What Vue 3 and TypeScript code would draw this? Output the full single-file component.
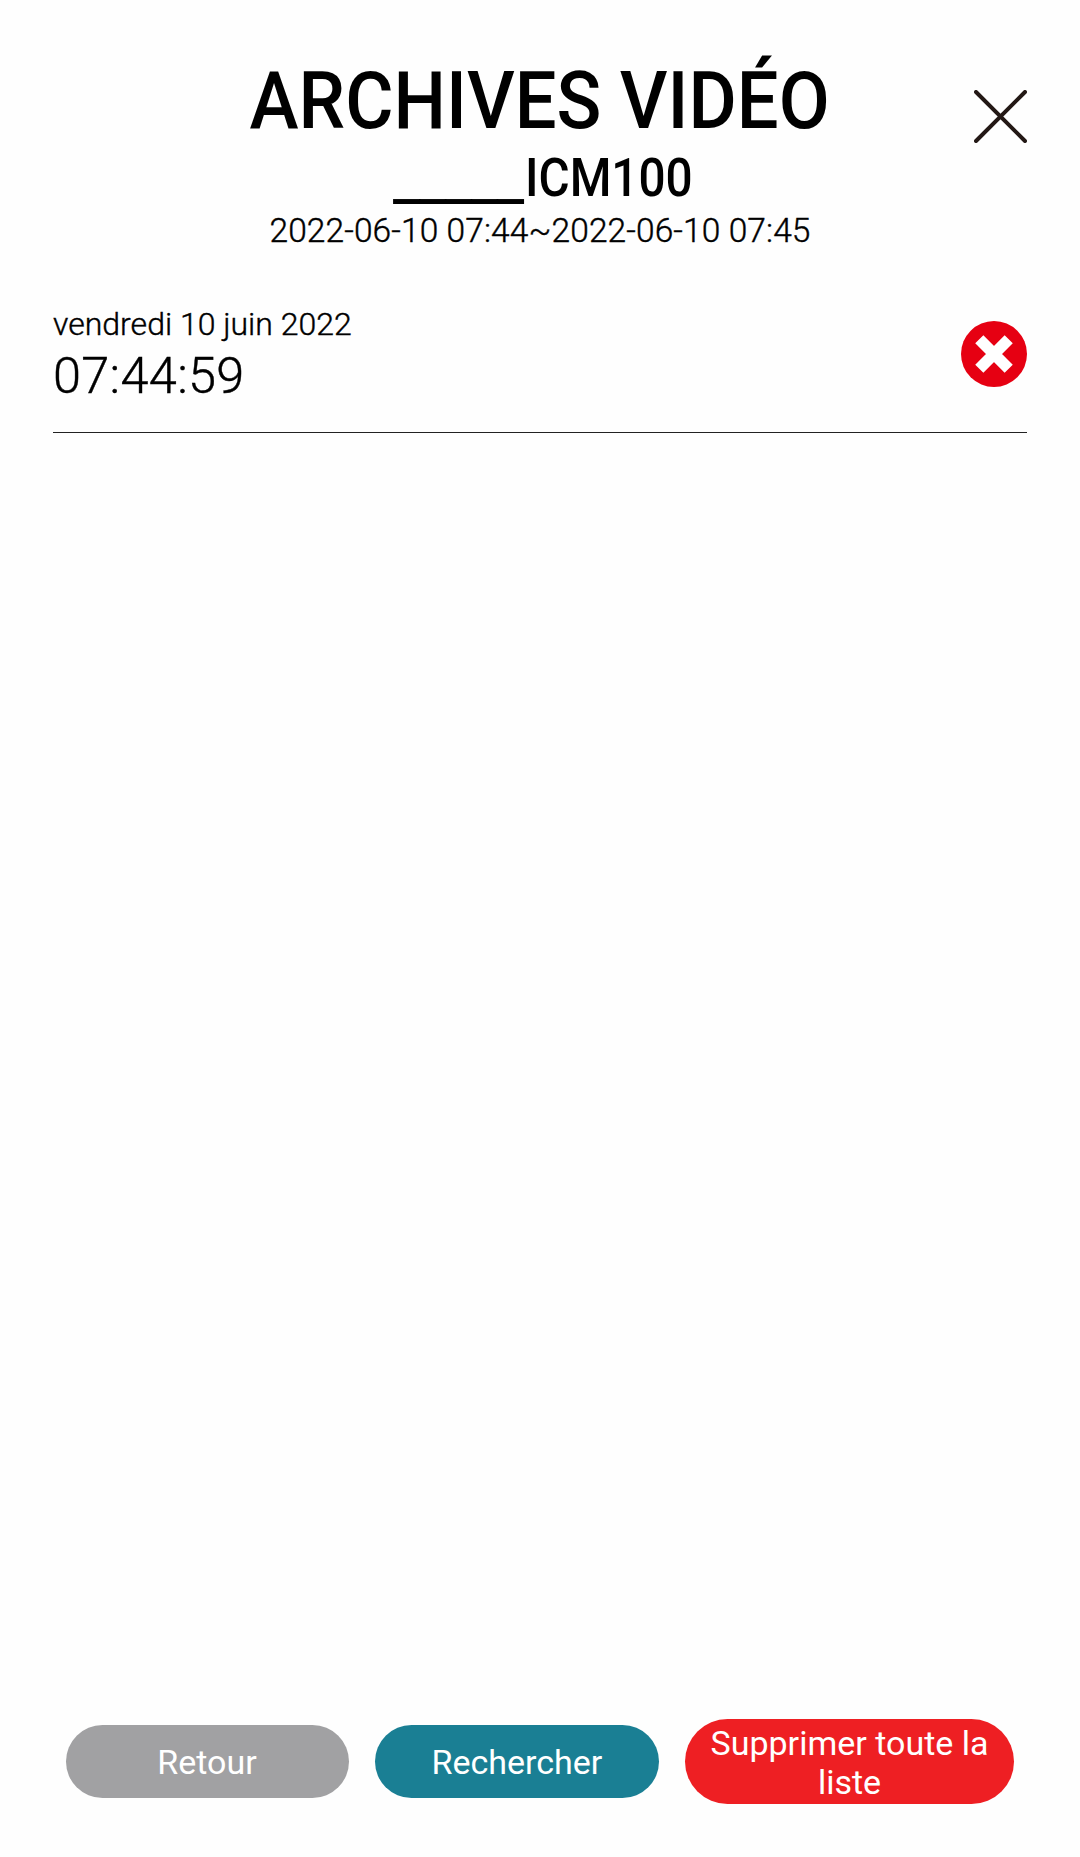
<script setup lang="ts">
interface Recording {
  date: string
  time: string
}

interface Action {
  label: string
  kind: 'back' | 'search' | 'remove'
}

const recordings: Recording[] = [{ date: 'vendredi 10 juin 2022', time: '07:44:59' }]

const actions: Action[] = [
  { label: 'Retour', kind: 'back' },
  { label: 'Rechercher', kind: 'search' },
  { label: 'Supprimer toute la liste', kind: 'remove' },
]
</script>

<template>
  <main class="page">
    <header class="header">
      <h1 class="title">ARCHIVES VIDÉO</h1>
      <h2 class="device"><span class="blank">_____</span><span class="model">ICM100</span></h2>
      <p class="range">2022-06-10 07:44~2022-06-10 07:45</p>
      <button class="close" aria-label="Fermer">
        <svg width="53" height="53" viewBox="0 0 53 53">
          <path d="M2 2L51 51M51 2L2 51" stroke="#231815" stroke-width="4" stroke-linecap="round" />
        </svg>
      </button>
    </header>

    <ul class="list">
      <li v-for="item in recordings" :key="item.time" class="row">
        <div class="stamp">
          <span class="date">{{ item.date }}</span>
          <span class="time">{{ item.time }}</span>
        </div>
        <button class="delete" aria-label="Supprimer">
          <svg width="66" height="66" viewBox="0 0 66 66">
            <circle cx="33" cy="33" r="33" fill="#e60012" />
            <path d="M18.3 18.3L47.7 47.7M47.7 18.3L18.3 47.7" stroke="#fff" stroke-width="11.5" />
          </svg>
        </button>
      </li>
    </ul>

    <footer class="actions">
      <button v-for="action in actions" :key="action.kind" class="action" :class="action.kind">
        {{ action.label }}
      </button>
    </footer>
  </main>
</template>

<style>
body {
  margin: 0;
  background: #fff;
}
</style>

<style scoped>
.page {
  box-sizing: border-box;
  width: 1080px;
  height: 1857px;
  display: flex;
  flex-direction: column;
  padding: 50px 53px 53px;
  background: #fefefe;
  color: #000;
  font-family: Roboto, 'Liberation Sans', sans-serif;
}

button {
  border: 0;
  padding: 0;
  background: none;
  font: inherit;
}

svg {
  display: block;
  fill: none;
}

.header {
  position: relative;
  box-sizing: border-box;
  height: 249px;
  padding-top: 1px;
  display: flex;
  flex-direction: column;
  align-items: center;
  white-space: nowrap;
}

.title {
  margin: 0;
  height: 100px;
  font-size: 79px;
  line-height: 100px;
  font-weight: 500;
  transform: scaleX(0.937);
}

.device {
  margin: 0;
  width: 294px;
  height: 54px;
  display: flex;
  align-items: baseline;
  font-size: 53px;
  line-height: 54px;
  font-weight: 500;
}

/* Tightened so that the underscores join into one rule. */
.blank {
  width: 131.5px;
  flex: none;
  letter-spacing: -1.5px;
  transform: translateY(3px) scaleX(1.165);
  transform-origin: left;
}

.model {
  transform: scaleX(0.9);
  transform-origin: left;
}

.range,
.date,
.time {
  font-weight: 300;
  -webkit-text-stroke: 0.4px #000;
}

.range {
  margin: 0;
  font-size: 33.5px;
  line-height: 52px;
  letter-spacing: 0.1px;
}

.close {
  position: absolute;
  top: 40px;
  right: 0;
}

.list {
  flex: 1;
  margin: 0;
  padding: 0;
  list-style: none;
}

.row {
  box-sizing: border-box;
  height: 134px;
  display: flex;
  justify-content: space-between;
  align-items: flex-start;
  padding-top: 5px;
  border-bottom: 1px solid #222;
}

.stamp {
  display: flex;
  flex-direction: column;
}

.date {
  font-size: 32px;
  line-height: 40px;
}

.time {
  font-size: 50.5px;
  line-height: 64px;
  letter-spacing: 0.3px;
}

.delete {
  margin-top: 17px;
}

.actions {
  display: flex;
  align-items: center;
  gap: 26px;
  padding: 0 13px;
}

.action {
  box-sizing: border-box;
  height: 73px;
  padding: 1px 0 0;
  border-radius: 37px;
  color: #fff;
  font-size: 34px;
  line-height: 39px;
}

.back {
  width: 283px;
  padding-right: 1px;
  background: #a1a1a3;
}

.search {
  width: 284px;
  background: #1a7f94;
}

.remove {
  width: 329px;
  height: 85px;
  padding: 2px 20px 0;
  border-radius: 43px;
  background: #ee1f23;
}
</style>
